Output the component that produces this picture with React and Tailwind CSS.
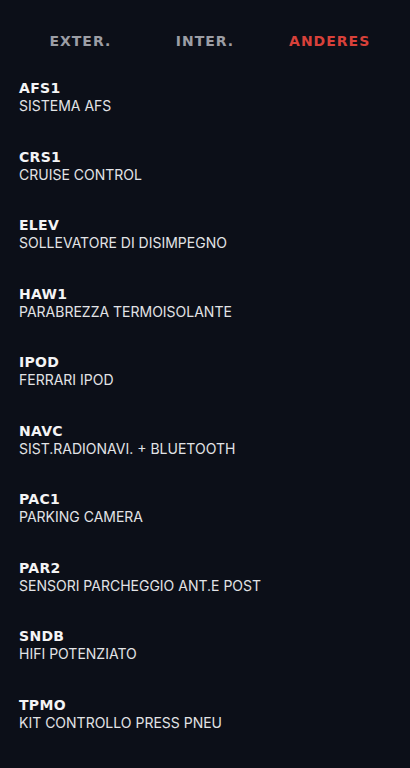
const tabs = [
  { label: 'EXTER.', active: false },
  { label: 'INTER.', active: false },
  { label: 'ANDERES', active: true },
]

const options = [
  { code: 'AFS1', name: 'SISTEMA AFS' },
  { code: 'CRS1', name: 'CRUISE CONTROL' },
  { code: 'ELEV', name: 'SOLLEVATORE DI DISIMPEGNO' },
  { code: 'HAW1', name: 'PARABREZZA TERMOISOLANTE' },
  { code: 'IPOD', name: 'FERRARI IPOD' },
  { code: 'NAVC', name: 'SIST.RADIONAVI. + BLUETOOTH' },
  { code: 'PAC1', name: 'PARKING CAMERA' },
  { code: 'PAR2', name: 'SENSORI PARCHEGGIO ANT.E POST' },
  { code: 'SNDB', name: 'HIFI POTENZIATO' },
  { code: 'TPMO', name: 'KIT CONTROLLO PRESS PNEU' },
]

export default function App() {
  return (
    <div className="w-[410px] h-[768px] overflow-hidden bg-[#0c0f18]">
      <div className="grid grid-cols-3 px-[18px] pt-[32px] h-[79px]">
        {tabs.map((t) => (
          <div
            key={t.label}
            className={`text-center text-[14px] leading-[18px] font-bold tracking-[1px] font-['DejaVu_Sans',sans-serif] ${
              t.active ? 'text-[#d8413a]' : 'text-[#9c9ea5]'
            }`}
          >
            {t.label}
          </div>
        ))}
      </div>
      <div className="flex flex-col px-[19px]">
        {options.map((o) => (
          <div key={o.code} className="h-[68.5px] flex flex-col">
            <span className="text-[14px] leading-[18px] font-bold tracking-[0.3px] text-[#f4f4f5] font-['DejaVu_Sans',sans-serif]">
              {o.code}
            </span>
            <span className="text-[14px] leading-[18px] text-[#e2e3e6] font-['Inter',sans-serif]">
              {o.name}
            </span>
          </div>
        ))}
      </div>
    </div>
  )
}
